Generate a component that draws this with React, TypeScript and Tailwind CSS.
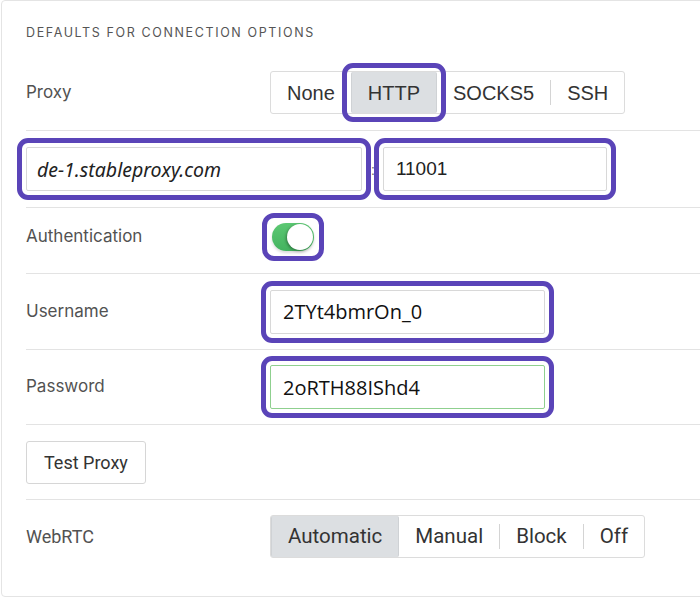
import React from 'react';

const hl = 'outline-[5px] outline-solid outline-[#5a44b8] outline-offset-[4px]';

const Segmented: React.FC<{ items: string[]; active: number; font: string; highlightActive?: boolean }> = ({
  items,
  active,
  font,
  highlightActive,
}) => (
  <div className="flex h-[43px] items-stretch rounded-[3px] border border-[#dcdcdc] bg-white">
    {items.map((item, i) => {
      const isActive = i === active;
      const showDivider = i > 0 && i !== active && i - 1 !== active;
      return (
        <div key={item} className="flex items-stretch">
          {showDivider && <div className="my-[8px] w-px bg-[#d4d4d4]" />}
          <div
            className={`flex items-center px-4 text-[#333] ${font} ${
              isActive ? 'bg-[#dcdfe2] border-x border-[#cfd2d5] rounded-[2px]' : ''
            } ${isActive && highlightActive ? hl + ' rounded-[2px]' : ''}`}
          >
            {item}
          </div>
        </div>
      );
    })}
  </div>
);

const Row: React.FC<{ h: string; children: React.ReactNode }> = ({ h, children }) => (
  <div className={`flex items-center border-b border-[#e3e3e3] ${h}`}>{children}</div>
);

const Label: React.FC<{ children: React.ReactNode; className?: string }> = ({ children, className }) => (
  <div className={`w-[244px] shrink-0 text-[#525252] ${className ?? "font-['Inter'] text-[17px]"}`}>{children}</div>
);

export default function App() {
  return (
    <div className="h-[599px] w-[700px] overflow-hidden bg-white">
      <div className="ml-px h-[597px] w-[760px] rounded-[4px] border border-[#e4e4e4] bg-white pl-[24px]">
        {/* Section heading */}
        <div className="flex h-[54px] items-center pt-[10px]">
          <span className="font-['Inter'] text-[12.5px] uppercase tracking-[0.13em] text-[#555]">
            Defaults for connection options
          </span>
        </div>

        {/* Proxy type */}
        <Row h="h-[76px]">
          <Label>Proxy</Label>
          <Segmented
            items={['None', 'HTTP', 'SOCKS5', 'SSH']}
            active={1}
            highlightActive
            font="font-['Liberation_Sans'] text-[20px]"
          />
        </Row>

        {/* Host / port */}
        <Row h="h-[77px]">
          <input
            readOnly
            value="de-1.stableproxy.com"
            className={`h-[44px] w-[336px] rounded-[2px] border border-[#d8d8d8] bg-white px-[10px] font-['Noto_Sans'] text-[19.5px] italic text-[#222] ${hl}`}
          />
          <span className="ml-[9px] mr-[8px] pt-[2px] font-['Liberation_Sans'] text-[14px] text-[#666]">:</span>
          <input
            readOnly
            value="11001"
            className={`h-[44px] w-[224px] rounded-[2px] border border-[#d8d8d8] bg-white px-[12px] font-['Liberation_Sans'] text-[19px] text-[#222] ${hl}`}
          />
        </Row>

        {/* Authentication */}
        <Row h="h-[66px] pb-[8px]">
          <Label>Authentication</Label>
          <div className={`ml-[1px] rounded-[3px] ${hl} outline-offset-[3px] px-[1px] py-[1px]`}>
            <div className="flex h-[28px] w-[42px] items-center justify-end rounded-full bg-gradient-to-b from-[#5cc873] to-[#43b35f] pr-[1px] shadow-[0_2px_3px_rgba(0,0,0,0.15)]">
              <div className="h-[26px] w-[26px] rounded-full bg-white shadow-[-1px_1px_3px_rgba(0,0,0,0.35)]" />
            </div>
          </div>
        </Row>

        {/* Username */}
        <Row h="h-[76px]">
          <Label>Username</Label>
          <input
            readOnly
            value="2TYt4bmrOn_0"
            className={`h-[44px] w-[275px] rounded-[2px] border border-[#d8d8d8] bg-white px-[12px] font-['Open_Sans'] text-[20px] text-[#111] ${hl}`}
          />
        </Row>

        {/* Password */}
        <Row h="h-[75px]">
          <Label>Password</Label>
          <input
            readOnly
            value="2oRTH88IShd4"
            className={`h-[44px] w-[275px] rounded-[2px] border border-[#8fd08f] bg-white px-[12px] font-['Open_Sans'] text-[20px] text-[#111] ${hl}`}
          />
        </Row>

        {/* Test */}
        <Row h="h-[75px]">
          <button className="flex h-[43px] items-center rounded-[3px] border border-[#d6d6d6] bg-white px-[17px] font-['Roboto'] text-[18px] text-[#333]">
            Test Proxy
          </button>
        </Row>

        {/* WebRTC */}
        <div className="flex h-[73px] items-center">
          <Label className="font-['Roboto'] text-[18px]">WebRTC</Label>
          <Segmented
            items={['Automatic', 'Manual', 'Block', 'Off']}
            active={0}
            font="font-['Roboto'] text-[20.5px]"
          />
        </div>
      </div>
    </div>
  );
}
